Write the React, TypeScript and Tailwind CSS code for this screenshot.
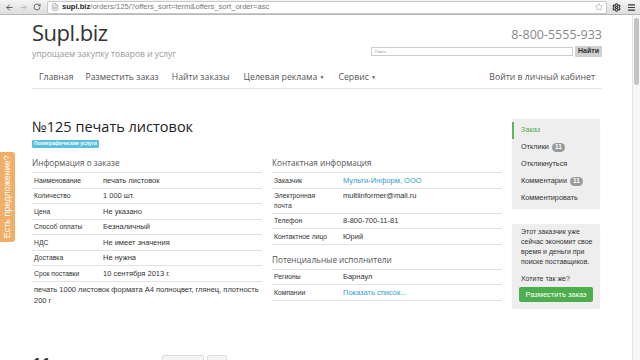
import React from "react";
import { ArrowLeft, ArrowRight, RotateCw, Star, Settings, Menu, FileText } from "lucide-react";

const ub = "font-['Open_Sans',sans-serif]";
const ar = "font-['Liberation_Sans',Arial,sans-serif]";

function Row({ k, v, link, last }: { k: React.ReactNode; v: React.ReactNode; link?: boolean; last?: boolean }) {
  return (
    <div
      className={`flex border-t border-[#e2e2e2] py-[2.5px] leading-[9.5px] text-[#333] ${last ? "border-b" : ""}`}
    >
      <div className="w-[71px] shrink-0 pl-[2px] text-[6.8px]">{k}</div>
      <div className={`text-[7.5px] ${link ? "text-[#2f9fc9]" : ""}`}>{v}</div>
    </div>
  );
}

function Pill({ n }: { n: string }) {
  return (
    <span className="ml-[3px] inline-flex h-[9px] items-center rounded-full bg-[#999] px-[3px] text-[6.5px] font-bold text-white">
      {n}
    </span>
  );
}

export default function App() {
  return (
    <div className="h-[360px] w-[640px] overflow-hidden bg-white">
      {/* browser chrome */}
      <div className="flex h-[15px] items-center border-b border-[#b8b8b8] bg-gradient-to-b from-[#f4f4f4] to-[#dedede]">
        <div className="flex w-[47px] items-center gap-[5px] pl-[5px] text-[#555]">
          <ArrowLeft size={9} strokeWidth={2.5} />
          <ArrowRight size={9} strokeWidth={2.5} className="text-[#bbb]" />
          <RotateCw size={8} strokeWidth={2.5} />
        </div>
        <div className="flex h-[13px] w-[560px] items-center rounded-[2px] border border-[#c8c8c8] bg-white pl-[3px]">
          <FileText size={8} className="text-[#999]" />
          <span className={`${ar} ml-[3px] text-[7.6px] text-[#777]`}>
            <span className="font-bold text-[#222]">supl.biz</span>/orders/125/?offers_sort=term&amp;offers_sort_order=asc
          </span>
          <Star size={8} className="ml-auto mr-[3px] text-[#aaa]" />
        </div>
        <div className="flex items-center gap-[6px] pl-[5px] text-[#333]">
          <Settings size={9} strokeWidth={3} />
          <Menu size={9} strokeWidth={3} />
        </div>
      </div>

      <div className="flex h-[345px]">
        <div className="relative flex-1 overflow-hidden">
          {/* feedback tab */}
          <div className="absolute left-0 top-[137px] flex h-[90px] w-[15px] items-center justify-center rounded-r-[3px] bg-[#f1ae66]">
            <span className={`${ar} -rotate-90 whitespace-nowrap text-[9px] text-white`}>Есть предложение?</span>
          </div>

          <div className="ml-[32px] w-[570px]">
            {/* header */}
            <div className="flex justify-between pt-[2px]">
              <div className={ub}>
                <div className="text-[22px] leading-[30px] tracking-[-0.5px] text-[#333]">Supl.biz</div>
                <div className="mt-[1px] text-[8.5px] leading-[12px] text-[#999]">упрощаем закупку товаров и услуг</div>
              </div>
              <div className="flex flex-col items-end pt-[9px]">
                <div className={`${ub} text-[12.5px] leading-[17px] text-[#888]`}>8-800-5555-933</div>
                <div className="mt-[3px] flex items-center gap-[2px]">
                  <div className={`${ar} flex h-[9px] w-[202px] items-center border border-[#ccc] bg-white pl-[3px] text-[4px] text-[#999]`}>Поиск</div>
                  <div className={`${ar} flex h-[11px] w-[27px] items-center justify-center rounded-[1px] bg-[#cfcfcf] text-[7px] font-bold text-[#333]`}>Найти</div>
                </div>
              </div>
            </div>

            {/* nav */}
            <div className={`${ub} mt-[8px] flex h-[21px] items-center border-b border-[#e5e5e5] text-[8.7px] text-[#555]`}>
              <span className="ml-[7px]">Главная</span>
              <span className="ml-[12px]">Разместить заказ</span>
              <span className="ml-[13px]">Найти заказы</span>
              <span className="ml-[14px]">Целевая реклама <span className="text-[5px] align-middle">▼</span></span>
              <span className="ml-[14px]">Сервис <span className="text-[5px] align-middle">▼</span></span>
              <span className="ml-auto mr-[7px]">Войти в личный кабинет</span>
            </div>

            {/* main */}
            <div className="mt-[30px] flex gap-[10px]">
              <div className="w-[470px]">
                <div className={`${ub} text-[14.5px] leading-[16px] text-[#222]`}>№125 печать листовок</div>
                <div className={`${ar} mt-[5px] flex h-[8px] w-fit items-center rounded-[1px] bg-[#5bc0de] px-[2px] text-[5px] font-bold text-white`}>
                  Полиграфические услуги
                </div>
                <div className="flex gap-[10px]">
                  <div className="w-[230px]">
                    <div className={`${ub} mb-[3.5px] mt-[8.5px] text-[8.2px] leading-[12px] text-[#555]`}>Информация о заказе</div>
                    <div className={ar}>
                      <Row k="Наименование" v="печать листовок" />
                      <Row k="Количество" v="1 000 шт." />
                      <Row k="Цена" v="Не указано" />
                      <Row k="Способ оплаты" v="Безналичный" />
                      <Row k="НДС" v="Не имеет значения" />
                      <Row k="Доставка" v="Не нужна" />
                      <Row k="Срок поставки" v="10 сентября 2013 г." />
                      <div className="border-t border-[#e2e2e2] pl-[2px] pt-[2px] text-[7.5px] leading-[11px] text-[#333]">
                        печать 1000 листовок формата А4 полноцвет, глянец, плотность 200 г
                      </div>
                    </div>
                  </div>
                  <div className="w-[230px]">
                    <div className={`${ub} mb-[3.5px] mt-[8.5px] text-[8.2px] leading-[12px] text-[#555]`}>Контактная информация</div>
                    <div className={ar}>
                      <Row k="Заказчик" v="Мульти-Информ, ООО" link />
                      <Row k={<>Электронная<br />почта</>} v="multiinformer@mail.ru" />
                      <Row k="Телефон" v="8-800-700-11-81" />
                      <Row k="Контактное лицо" v="Юрий" last />
                    </div>
                    <div className={`${ub} mb-[3px] mt-[9px] text-[8.2px] leading-[12px] text-[#555]`}>Потенциальные исполнители</div>
                    <div className={ar}>
                      <Row k="Регионы" v="Барнаул" />
                      <Row k="Компании" v="Показать список..." link last />
                    </div>
                  </div>
                </div>
              </div>

              {/* sidebar */}
              <div className={`${ar} w-[88px] text-[7.3px] text-[#333]`}>
                <div className="rounded-[3px] bg-[#eeeeee] py-[2.5px] shadow-[0_0_1px_rgba(0,0,0,0.15)]">
                  <div className="flex h-[17px] items-center border-l-2 border-[#5cb85c] pl-[7px] text-[#4cae4c]">Заказ</div>
                  <div className="flex h-[17px] items-center pl-[9px]">Отклики<Pill n="11" /></div>
                  <div className="flex h-[17px] items-center pl-[9px]">Откликнуться</div>
                  <div className="flex h-[17px] items-center pl-[9px]">Комментарии<Pill n="11" /></div>
                  <div className="flex h-[17px] items-center pl-[9px]">Комментировать</div>
                </div>
                <div className="mt-[15px] rounded-[3px] bg-[#eeeeee] pb-[7px] pl-[9px] pr-[6px] pt-[3px] text-[7px] leading-[10px] shadow-[0_0_1px_rgba(0,0,0,0.15)]">
                  <div>Этот заказчик уже сейчас экономит свое время и деньги при поиске поставщиков.</div>
                  <div className="mt-[7px]">Хотите так же?</div>
                  <div className="-ml-[2px] mt-[3px] flex h-[15px] w-[74px] items-center justify-center rounded-[2px] bg-[#4cae4c] text-[7.5px] text-white">
                    Разместить заказ
                  </div>
                </div>
              </div>
            </div>

            {/* bottom */}
            <div className="mt-[45px] flex items-start">
              <div className={`${ub} text-[16px] font-bold leading-[20px] text-[#333]`}>11 откликов</div>
              <div className="ml-[27px] mt-[1px] h-[14px] w-[42px] rounded-[2px] border border-[#ddd] bg-[#f5f5f5]" />
              <div className="ml-[3px] mt-[1px] h-[14px] w-[20px] rounded-[2px] border border-[#ddd] bg-[#f5f5f5]" />
            </div>
          </div>
        </div>
        {/* scrollbar */}
        <div className="w-[8px] border-l border-[#e5e5e5] bg-[#f7f7f7] pt-[3px]">
          <div className="mx-auto h-[67px] w-[5px] rounded-full bg-[#c4c4c4]" />
        </div>
      </div>
    </div>
  );
}
